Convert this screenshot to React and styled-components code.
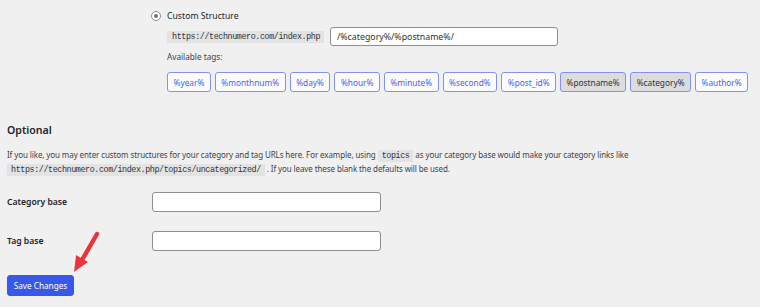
import React from 'react'
import styled, { createGlobalStyle } from 'styled-components'

const GlobalStyle = createGlobalStyle`
  html, body {
    margin: 0;
    padding: 0;
    background: #f0f0f1;
  }
  body {
    font-family: 'Noto Sans', 'Open Sans', sans-serif;
    color: #1d2327;
  }
`

const tags = [
  { name: '%year%' },
  { name: '%monthnum%' },
  { name: '%day%' },
  { name: '%hour%' },
  { name: '%minute%' },
  { name: '%second%' },
  { name: '%post_id%' },
  { name: '%postname%', active: true },
  { name: '%category%', active: true },
  { name: '%author%' },
]

export default function App() {
  return (
    <>
      <GlobalStyle />
      <Page>
        <Structure>
          <RadioRow>
            <Radio />
            <RadioLabel>Custom Structure</RadioLabel>
          </RadioRow>
          <PrefixRow>
            <Prefix>https://technumero.com/index.php</Prefix>
            <StructureInput defaultValue="/%category%/%postname%/" />
          </PrefixRow>
          <TagsLabel>Available tags:</TagsLabel>
          <TagList>
            {tags.map((t) => (
              <Tag key={t.name} $active={t.active}>
                {t.name}
              </Tag>
            ))}
          </TagList>
        </Structure>

        <Heading>Optional</Heading>
        <Intro>
          If you like, you may enter custom structures for your category and tag URLs here. For example,
          using <Code>topics</Code> as your category base would make your category links like{' '}
          <Code>https://technumero.com/index.php/topics/uncategorized/</Code> . If you leave these blank the
          defaults will be used.
        </Intro>

        <FieldRow>
          <FieldLabel>Category base</FieldLabel>
          <TextInput />
        </FieldRow>
        <FieldRow>
          <FieldLabel>Tag base</FieldLabel>
          <TextInput />
        </FieldRow>

        <SaveButton>Save Changes</SaveButton>

        <Arrow viewBox="0 0 40 50" width="40" height="50">
          <line x1="32" y1="3" x2="17" y2="29" stroke="#e8343a" strokeWidth="4.5" strokeLinecap="round" />
          <polygon points="9,41 23,31 11,24" fill="#e8343a" />
        </Arrow>
      </Page>
    </>
  )
}

const Page = styled.div`
  position: relative;
  width: 760px;
  height: 307px;
  padding: 9px 0 0 7px;
  box-sizing: border-box;
  overflow: hidden;
`

const Structure = styled.div`
  display: flex;
  flex-direction: column;
  padding-left: 144px;
`

const RadioRow = styled.div`
  display: flex;
  align-items: center;
  gap: 6px;
  height: 14px;
`

const Radio = styled.span`
  width: 10px;
  height: 10px;
  border: 1px solid #8c8f94;
  border-radius: 50%;
  background: #fff;
  box-sizing: border-box;
  display: flex;
  align-items: center;
  justify-content: center;
  &::after {
    content: '';
    width: 4px;
    height: 4px;
    border-radius: 50%;
    background: #6e7378;
  }
`

const RadioLabel = styled.span`
  font-size: 8.7px;
  line-height: 14px;
`

const PrefixRow = styled.div`
  display: flex;
  align-items: center;
  gap: 6px;
  margin: 4px 0 0 16px;
`

const Prefix = styled.code`
  font-family: 'Liberation Mono', monospace;
  font-size: 8.4px;
  letter-spacing: -0.4px;
  line-height: 12px;
  background: #e3e3e4;
  padding: 0 4px 0 5px;
  color: #2c3338;
`

const StructureInput = styled.input`
  width: 228px;
  height: 19px;
  box-sizing: border-box;
  border: 1px solid #8c8f94;
  border-radius: 3px;
  padding: 0 6px;
  font-family: 'Noto Sans', sans-serif;
  font-size: 8.8px;
  color: #2c3338;
  background: #fff;
  outline: none;
`

const TagsLabel = styled.div`
  font-size: 8.2px;
  line-height: 12px;
  color: #3c434a;
  margin: 5px 0 0 16px;
`

const TagList = styled.div`
  display: flex;
  gap: 4px;
  margin: 9px 0 0 16px;
`

const Tag = styled.button`
  height: 20px;
  padding: 0 5.5px;
  margin: 0;
  border: 1.5px solid #8293ef;
  border-radius: 3px;
  font-family: 'Noto Sans', sans-serif;
  font-size: 8.3px;
  background: ${(p) => (p.$active ? '#dcdcde' : '#fbfbfc')};
  color: ${(p) => (p.$active ? '#2c3338' : '#4a64e6')};
  cursor: pointer;
`

const Heading = styled.h2`
  font-size: 10.6px;
  line-height: 14px;
  font-weight: 600;
  margin: 31px 0 0;
`

const Intro = styled.p`
  max-width: 655px;
  font-size: 8px;
  letter-spacing: -0.1px;
  line-height: 13px;
  margin: 11px 0 0;
  color: #3c434a;
`

const Code = styled.code`
  font-family: 'Liberation Mono', monospace;
  font-size: 8.4px;
  letter-spacing: -0.4px;
  line-height: 11px;
  background: #e3e3e4;
  padding: 1px 4px;
  color: #2c3338;
  white-space: nowrap;
`

const FieldRow = styled.div`
  display: flex;
  align-items: center;
  margin-top: 16px;
  & + & {
    margin-top: 19px;
  }
`

const FieldLabel = styled.label`
  width: 145px;
  font-size: 8.6px;
  font-weight: 600;
`

const TextInput = styled.input`
  width: 229px;
  height: 20px;
  box-sizing: border-box;
  border: 1px solid #8c8f94;
  border-radius: 3px;
  background: #fff;
  outline: none;
`

const SaveButton = styled.button`
  display: block;
  margin-top: 24px;
  width: 67px;
  height: 21px;
  padding: 0;
  border: 1px solid #3858e9;
  border-radius: 3px;
  background: #3858e9;
  color: #fff;
  font-family: 'Noto Sans', sans-serif;
  font-size: 8.2px;
  cursor: pointer;
`

const Arrow = styled.svg`
  position: absolute;
  left: 65px;
  top: 231px;
  filter: drop-shadow(0 0 1px rgba(255, 255, 255, 0.8));
`
